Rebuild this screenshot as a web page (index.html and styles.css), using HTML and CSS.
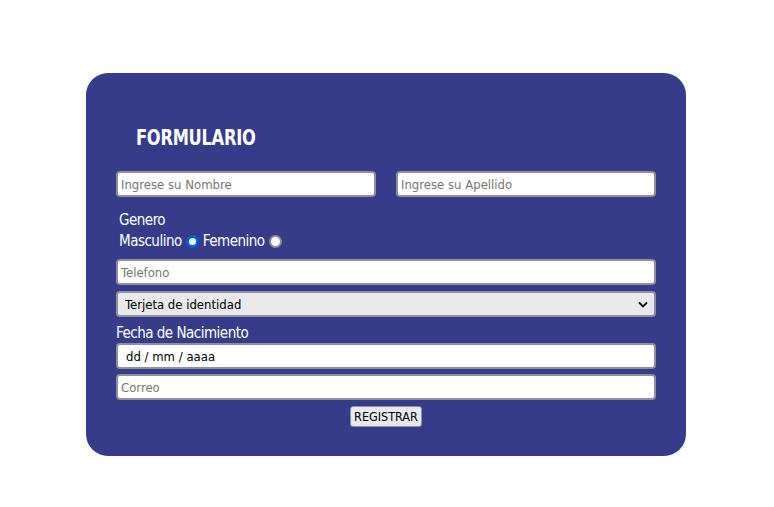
FILE: index.html
```html
<!DOCTYPE html>
<html lang="es">
<head>
<meta charset="utf-8">
<title>Formulario</title>
<link rel="stylesheet" href="styles.css">
</head>
<body>
<form class="card">
  <h1 class="title">FORMULARIO</h1>
  <div class="row-two">
    <input class="field" type="text" placeholder="Ingrese su Nombre">
    <input class="field" type="text" placeholder="Ingrese su Apellido">
  </div>
  <div class="gender">
    <div class="label">Genero</div>
    <div class="radios">
      <span>Masculino</span><input class="radio" type="radio" name="g" checked>
      <span>Femenino</span><input class="radio" type="radio" name="g">
    </div>
  </div>
  <input class="field full tel" type="text" placeholder="Telefono">
  <div class="select-wrap">
    <select class="field full select">
      <option>Terjeta de identidad</option>
    </select>
    <svg class="chevron" width="10" height="7" viewBox="0 0 10 7"><path d="M1 1.5 L5 5.5 L9 1.5" fill="none" stroke="#111" stroke-width="1.8"/></svg>
  </div>
  <div class="label date-label">Fecha de Nacimiento</div>
  <input class="field full date" type="text" placeholder="dd / mm / aaaa">
  <input class="field full mail" type="text" placeholder="Correo">
  <div class="actions"><button class="btn" type="button">REGISTRAR</button></div>
</form>
</body>
</html>
```
FILE: styles.css
```css
html, body { margin: 0; padding: 0; background: #fff; }
.card {
  box-sizing: border-box;
  width: 600px;
  height: 383px;
  margin: 73px 0 0 86px;
  padding: 52px 30px 0;
  background: #363c8a;
  border-radius: 22px;
  display: flex;
  flex-direction: column;
}
.title {
  margin: 0 0 20px 20px;
  font-family: "DejaVu Sans Condensed", "DejaVu Sans", sans-serif;
  font-weight: bold;
  font-size: 21px;
  line-height: 26px;
  color: #fff;
  letter-spacing: -0.3px;
  transform: scaleX(0.86);
  transform-origin: left center;
}
.row-two { display: flex; justify-content: space-between; }
.row-two .field { width: 260px; }
.field {
  box-sizing: border-box;
  height: 26px;
  border: 2px solid #8f8f9d;
  border-radius: 4px;
  background: #fff;
  padding: 0 3px;
  font-family: "DejaVu Sans Condensed", "DejaVu Sans", sans-serif;
  font-size: 13px;
  color: #000;
  outline: none;
}
.field::placeholder { color: #757575; }
.full { width: 540px; }
.label, .radios {
  font-family: "DejaVu Sans Condensed", "DejaVu Sans", sans-serif;
  font-size: 15px;
  color: #fff;
  letter-spacing: -0.5px;
}
.gender { margin: 13px 0 7px 3px; }
.label { line-height: 20px; }
.radios { display: flex; align-items: center; line-height: 22px; }
.radio {
  appearance: none;
  -webkit-appearance: none;
  box-sizing: border-box;
  margin: 0 4px 0 4px;
  width: 13px;
  height: 13px;
  border-radius: 50%;
  border: 2px solid #8f8f9d;
  background: #fff;
}
.radio:checked {
  border: 3px solid #0060df;
  background: #fff;
}
.select-wrap { position: relative; margin-top: 6px; width: 540px; height: 26px; }
.select {
  appearance: none;
  -webkit-appearance: none;
  background: #e9e8ed;
  padding-left: 7px;
  font-family: "DejaVu Sans Condensed", "DejaVu Sans", sans-serif;
  font-size: 13px;
}
.chevron { position: absolute; right: 8px; top: 10px; pointer-events: none; }
.date-label { margin-top: 6px; line-height: 20px; }
.date { padding-left: 8px; }
.date::placeholder { color: #000; }
.mail { margin-top: 5px; }
.actions { display: flex; justify-content: center; margin-top: 6px; }
.btn {
  height: 21px;
  padding: 0 3px;
  border: 1px solid #8f8f9d;
  border-radius: 3px;
  background: #e9e9ed;
  font-family: "DejaVu Sans Condensed", "DejaVu Sans", sans-serif;
  font-size: 12.5px;
  color: #000;
}
```
